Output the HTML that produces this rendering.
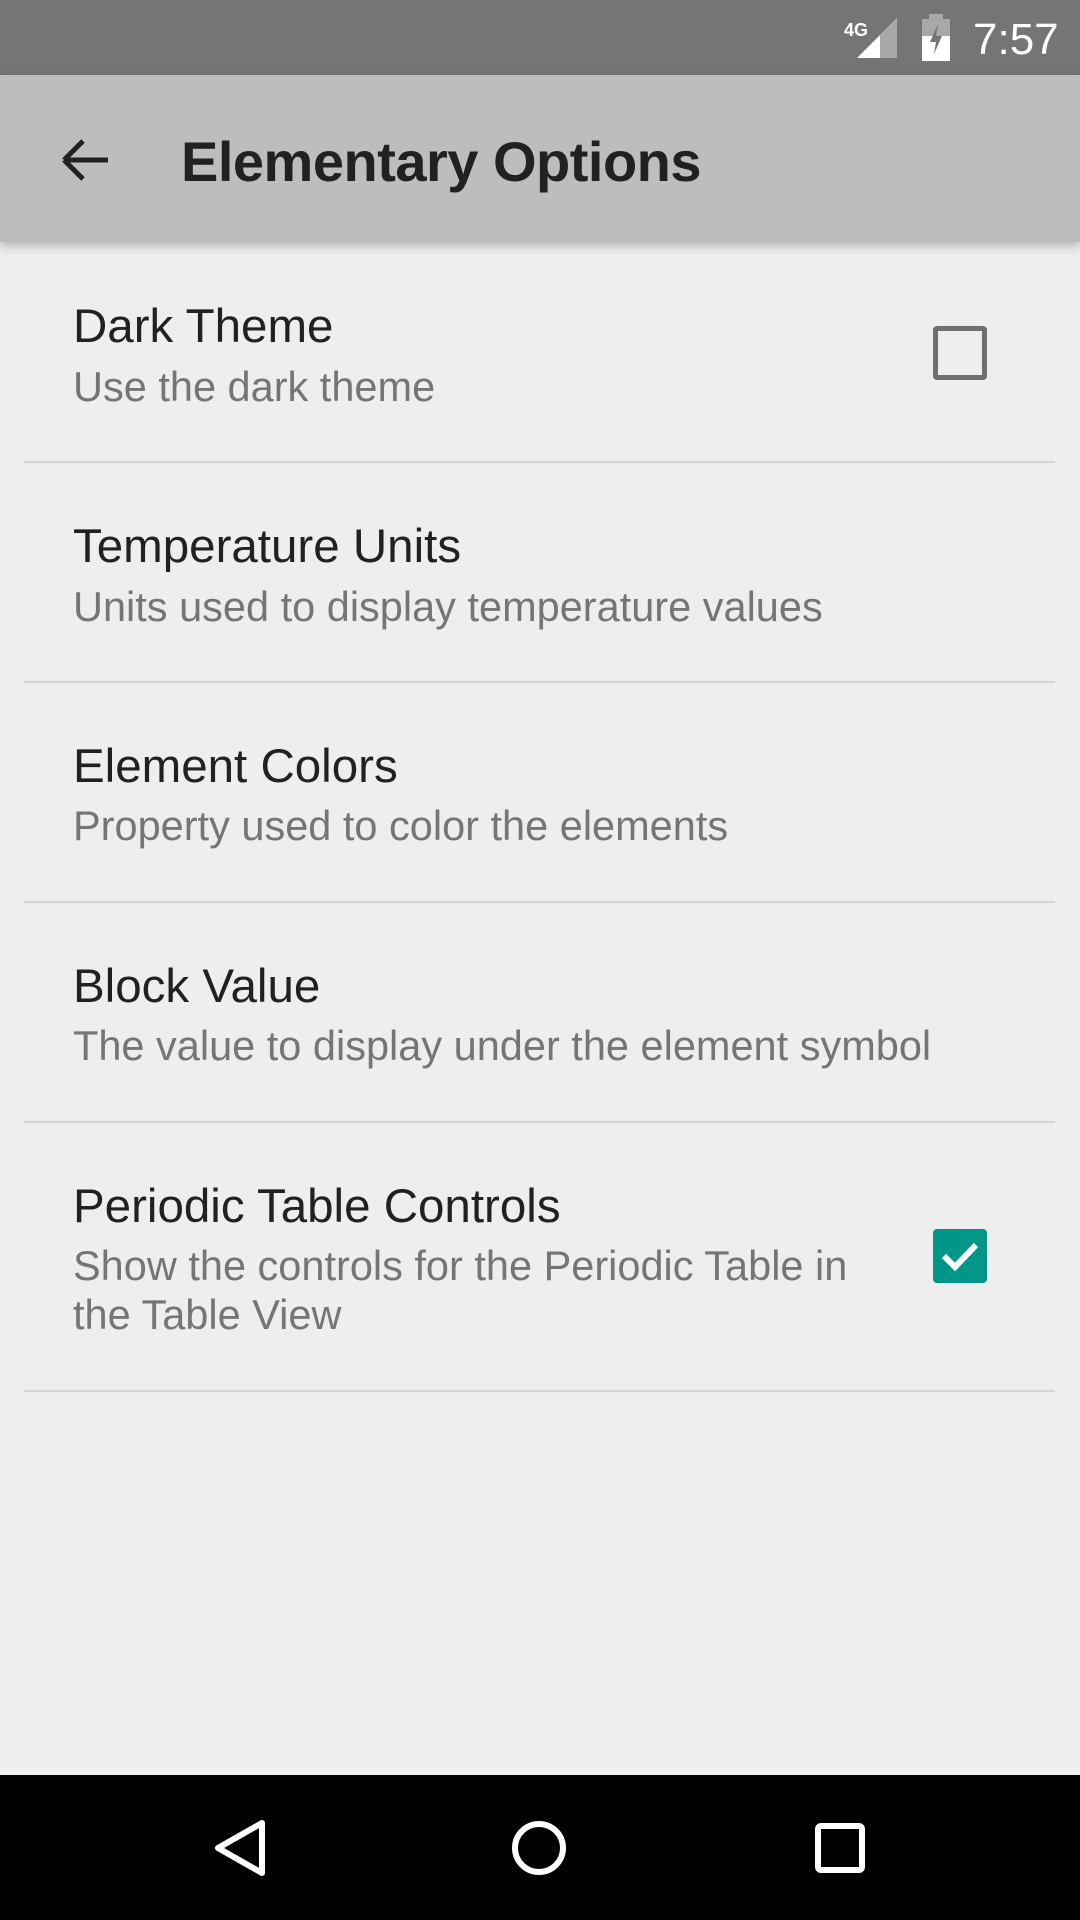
<!DOCTYPE html>
<html><head><meta charset="utf-8"><style>
body{margin:0;width:1080px;height:1920px;background:#eeeeee;font-family:"Liberation Sans",sans-serif;position:relative;overflow:hidden}
.abs{position:absolute}
.t{position:absolute;left:73px;font-size:47.5px;color:#212121;line-height:1}
.s{position:absolute;left:73px;font-size:41.5px;color:#757575;line-height:49px}
.d{position:absolute;left:24px;width:1031px;height:2px;background:#d4d4d4}
</style></head><body>
<div class="abs" style="left:0;top:0;width:1080px;height:75px;background:#757575"></div>
<svg class="abs" style="left:840px;top:14px" width="60" height="46" viewBox="0 0 60 46">
<polygon points="57,4 57,44 17,44" fill="#fff"/>
<polygon points="57,4 57,44 40,44 40,21" fill="#a8a8a8"/>
<text x="4" y="22" font-family="Liberation Sans" font-weight="bold" font-size="18" fill="#fff">4G</text>
</svg>
<svg class="abs" style="left:920px;top:14px" width="34" height="48" viewBox="0 0 34 48">
<rect x="9" y="0" width="14" height="6" fill="#a8a8a8"/>
<rect x="2" y="5" width="28" height="42" fill="#a8a8a8"/>
<rect x="2" y="22" width="28" height="25" fill="#fff"/>
<polygon points="18,10 10,28 16,28 14,40 22,22 16,22" fill="#757575"/>
</svg>
<div class="abs" style="left:973px;top:15px;font-size:44px;color:#fff">7:57</div>
<div class="abs" style="left:0;top:75px;width:1080px;height:167px;background:#bdbdbd;box-shadow:0 4px 10px rgba(0,0,0,.25)"></div>
<svg class="abs" style="left:58px;top:135px" width="54" height="50" viewBox="0 0 54 50">
<path d="M6 25H50M6 25L25 6M6 25L25 44" stroke="#212121" stroke-width="5" fill="none"/>
</svg>
<div class="abs" style="left:181px;top:134px;font-size:56px;font-weight:bold;color:#212121;line-height:1;letter-spacing:-0.5px">Elementary Options</div>

<div class="t" style="top:303px">Dark Theme</div>
<div class="s" style="top:362px">Use the dark theme</div>
<div class="abs" style="left:933px;top:326px;width:54px;height:54px;border:5.5px solid #6f6f6f;border-radius:4px;box-sizing:border-box"></div>
<div class="d" style="top:461px"></div>

<div class="t" style="top:523px">Temperature Units</div>
<div class="s" style="top:582px">Units used to display temperature values</div>
<div class="d" style="top:681px"></div>

<div class="t" style="top:743px">Element Colors</div>
<div class="s" style="top:801px">Property used to color the elements</div>
<div class="d" style="top:901px"></div>

<div class="t" style="top:963px">Block Value</div>
<div class="s" style="top:1021px">The value to display under the element symbol</div>
<div class="d" style="top:1121px"></div>

<div class="t" style="top:1183px">Periodic Table Controls</div>
<div class="s" style="top:1241px">Show the controls for the Periodic Table in<br>the Table View</div>
<svg class="abs" style="left:933px;top:1229px" width="54" height="54" viewBox="0 0 54 54">
<rect x="0" y="0" width="54" height="54" rx="4" fill="#009688"/>
<path d="M11 27L22 38L43 16" stroke="#fff" stroke-width="6" fill="none"/>
</svg>
<div class="d" style="top:1390px"></div>

<div class="abs" style="left:0;top:1775px;width:1080px;height:145px;background:#000"></div>
<svg class="abs" style="left:0;top:1775px" width="1080" height="145" viewBox="0 0 1080 145">
<polygon points="262,48 262,98 218,73" fill="none" stroke="#fff" stroke-width="6" stroke-linejoin="round"/>
<circle cx="539" cy="73" r="24" fill="none" stroke="#fff" stroke-width="6"/>
<rect x="818" y="51" width="44" height="44" rx="3" fill="none" stroke="#fff" stroke-width="6"/>
</svg>
</body></html>
